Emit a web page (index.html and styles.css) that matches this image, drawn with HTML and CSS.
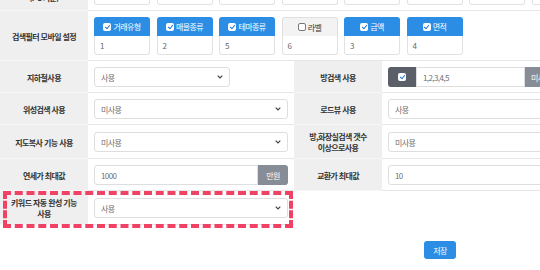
FILE: index.html
```html
<!DOCTYPE html>
<html lang="ko">
<head>
    <meta charset="UTF-8">
    <title>지도 설정</title>
    <link rel="stylesheet" href="styles.css">
</head>
<body>
    <div class="page">
        <div class="form-table">
            <!-- PC filter row (scrolled off top) -->
            <div class="row">
                <div class="th">검색필터 PC<br>노출 순서<br>(PC 기준)</div>
                <div class="td chips span3">
                    <div class="chip"><div class="chip-head">거래유형</div><div class="chip-body">1</div></div>
                    <div class="chip"><div class="chip-head">매물종류</div><div class="chip-body">2</div></div>
                    <div class="chip"><div class="chip-head">테마종류</div><div class="chip-body">3</div></div>
                    <div class="chip"><div class="chip-head">라벨</div><div class="chip-body">4</div></div>
                    <div class="chip"><div class="chip-head">금액</div><div class="chip-body">5</div></div>
                    <div class="chip"><div class="chip-head">면적</div><div class="chip-body">6</div></div>
                    <div class="chip"><div class="chip-head">층수</div><div class="chip-body">7</div></div>
                    <div class="chip"><div class="chip-head">방수</div><div class="chip-body">8</div></div>
                </div>
            </div>

            <div class="row">
                <div class="th">검색필터 모바일 설정</div>
                <div class="td chips span3">
                    <div class="chip"><div class="chip-head"><span class="check on"></span>거래유형</div><div class="chip-body">1</div></div>
                    <div class="chip"><div class="chip-head"><span class="check on"></span>매물종류</div><div class="chip-body">2</div></div>
                    <div class="chip"><div class="chip-head"><span class="check on"></span>테마종류</div><div class="chip-body">5</div></div>
                    <div class="chip off"><div class="chip-head"><span class="check"></span>라벨</div><div class="chip-body">6</div></div>
                    <div class="chip"><div class="chip-head"><span class="check on"></span>금액</div><div class="chip-body">3</div></div>
                    <div class="chip"><div class="chip-head"><span class="check on"></span>면적</div><div class="chip-body">4</div></div>
                </div>
            </div>

            <div class="row">
                <div class="th">지하철사용</div>
                <div class="td">
                    <div class="select narrow">사용<svg class="chev" width="6" height="4" viewBox="0 0 6 4"><polyline points="0.7,0.7 3,3 5.3,0.7"/></svg></div>
                </div>
                <div class="th">방검색 사용</div>
                <div class="td">
                    <div class="input-group">
                        <span class="addon"><span class="check on"></span></span>
                        <div class="input short">1,2,3,4,5</div>
                        <span class="btn-gray">미사용</span>
                    </div>
                </div>
            </div>

            <div class="row">
                <div class="th">위성검색 사용</div>
                <div class="td">
                    <div class="select">미사용<svg class="chev" width="6" height="4" viewBox="0 0 6 4"><polyline points="0.7,0.7 3,3 5.3,0.7"/></svg></div>
                </div>
                <div class="th">로드뷰 사용</div>
                <div class="td">
                    <div class="select">사용<svg class="chev" width="6" height="4" viewBox="0 0 6 4"><polyline points="0.7,0.7 3,3 5.3,0.7"/></svg></div>
                </div>
            </div>

            <div class="row">
                <div class="th">지도복사 기능 사용</div>
                <div class="td">
                    <div class="select">미사용<svg class="chev" width="6" height="4" viewBox="0 0 6 4"><polyline points="0.7,0.7 3,3 5.3,0.7"/></svg></div>
                </div>
                <div class="th">방,화장실검색 갯수<br>이상으로사용</div>
                <div class="td">
                    <div class="select">미사용<svg class="chev" width="6" height="4" viewBox="0 0 6 4"><polyline points="0.7,0.7 3,3 5.3,0.7"/></svg></div>
                </div>
            </div>

            <div class="row">
                <div class="th">연세가 최대값</div>
                <div class="td">
                    <div class="input-group full">
                        <div class="input grow">1000</div>
                        <span class="btn-gray unit">만원</span>
                    </div>
                </div>
                <div class="th">교환가 최대값</div>
                <div class="td">
                    <div class="input grow">10</div>
                </div>
            </div>

            <div class="row last">
                <div class="th">키워드 자동 완성 기능<br>사용</div>
                <div class="td">
                    <div class="select">사용<svg class="chev" width="6" height="4" viewBox="0 0 6 4"><polyline points="0.7,0.7 3,3 5.3,0.7"/></svg></div>
                </div>
                <div class="highlight"></div>
            </div>
        </div>

        <div class="actions">
            <button class="btn-save">저장</button>
        </div>
    </div>
</body>
</html>
```

FILE: styles.css
```css
body {
    margin: 0;
    font-family: "Noto Sans CJK KR", "Noto Sans", sans-serif;
    font-size: 8px;
    letter-spacing: -0.6px;
    color: #333;
    background: #fff;
    overflow: hidden;
}

.page {
    width: 880px;
    margin-top: -39px;
}

.row {
    display: grid;
    grid-template-columns: 88px 206px 88px 498px;
}

.row.last {
    position: relative;
    grid-template-columns: 88px 206px;
}

.th {
    background: #efefef;
    border-bottom: 1px solid #f7f7f7;
    display: flex;
    align-items: center;
    justify-content: center;
    text-align: center;
    font-weight: 700;
    line-height: 11px;
    padding: 6px 6px 5px;
}

.td {
    border-bottom: 1px solid #e6e6e6;
    padding: 6px 6px 5px;
    display: flex;
    align-items: center;
}

.span3 {
    grid-column: span 3;
}

/* filter chips */
.chips {
    gap: 6.5px;
}

.chip {
    width: 56px;
}

.chip-head {
    height: 19px;
    box-sizing: border-box;
    background: #2b8de4;
    color: #fff;
    border-radius: 3px 3px 0 0;
    display: flex;
    align-items: center;
    justify-content: center;
    gap: 2px;
}

.chip-body {
    height: 19px;
    box-sizing: border-box;
    border: 1px solid #e2e2e2;
    border-top: none;
    border-radius: 0 0 3px 3px;
    color: #666;
    padding-left: 5px;
    display: flex;
    align-items: center;
}

.chip.off .chip-head {
    background: #f3f3f3;
    color: #333;
    border: 1px solid #e0e0e0;
    border-bottom: none;
}

.check {
    width: 8px;
    height: 8px;
    box-sizing: border-box;
    border: 1px solid #777;
    border-radius: 2px;
    background: #fff;
    position: relative;
    flex-shrink: 0;
}

.check.on {
    border: none;
    background: #fff;
}

.check.on::after {
    content: "";
    position: absolute;
    left: 2.6px;
    top: 1px;
    width: 2.2px;
    height: 4px;
    border: solid #2b7ad8;
    border-width: 0 1.4px 1.4px 0;
    transform: rotate(40deg);
}

/* inputs */
.select,
.input {
    height: 20px;
    box-sizing: border-box;
    border: 1px solid #dedede;
    border-radius: 3px;
    background: #fff;
    color: #6f6f6f;
    padding: 0 6px;
    display: flex;
    align-items: center;
    flex: 1;
}

.select {
    justify-content: space-between;
}

.select.narrow {
    flex: none;
    width: 136px;
}

.chev {
    fill: none;
    stroke: #444;
    stroke-width: 1.2;
}

.input-group {
    display: flex;
    align-items: center;
}

.input-group.full {
    flex: 1;
}

.input-group .input {
    border-radius: 0;
}

.input.short {
    flex: none;
    width: 109px;
}

.addon {
    width: 28px;
    height: 20px;
    background: #5b6068;
    border-radius: 3px 0 0 3px;
    display: flex;
    align-items: center;
    justify-content: center;
}

.btn-gray {
    height: 20px;
    box-sizing: border-box;
    background: #878d96;
    color: #fff;
    padding: 0 6px;
    border-radius: 0 3px 3px 0;
    display: flex;
    align-items: center;
}

.btn-gray.unit {
    width: 30px;
    justify-content: center;
    padding: 0;
}

.input-group.full .input {
    border-radius: 3px 0 0 3px;
}

/* marker drawn over the last row */
.highlight {
    position: absolute;
    left: 3px;
    top: 0;
    width: 290px;
    height: 37px;
    box-sizing: border-box;
    border: 4px dashed #ef4264;
    pointer-events: none;
}

.actions {
    display: flex;
    justify-content: center;
    margin-top: 16px;
}

.btn-save {
    height: 18px;
    width: 32px;
    padding: 0;
    background: #2b8de4;
    color: #fff;
    border: none;
    border-radius: 3px;
    font-family: inherit;
    font-size: 8px;
    letter-spacing: -0.6px;
}
```
